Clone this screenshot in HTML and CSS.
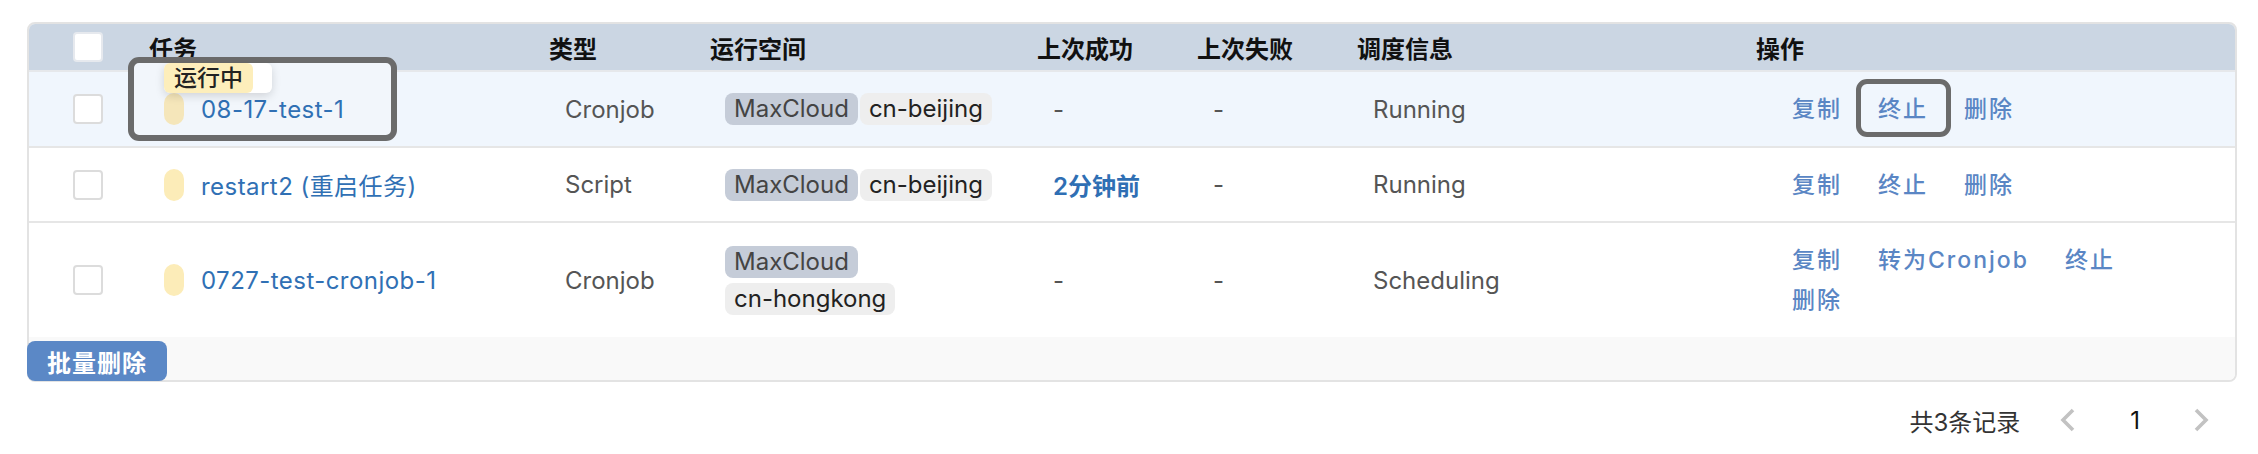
FILE: index.html
```html
<!DOCTYPE html>
<html lang="zh-CN">
<head>
<meta charset="utf-8">
<title>任务列表</title>
<link rel="stylesheet" href="styles.css">
</head>
<body>
<div class="page">
  <div class="table">
    <div class="row head">
      <div class="cell c-check"><span class="checkbox"></span></div>
      <div class="cell">任务</div>
      <div class="cell">类型</div>
      <div class="cell">运行空间</div>
      <div class="cell">上次成功</div>
      <div class="cell">上次失败</div>
      <div class="cell">调度信息</div>
      <div class="cell">操作</div>
    </div>

    <div class="row body r1 active">
      <div class="cell c-check"><span class="checkbox"></span></div>
      <div class="cell c-name">
        <span class="annot annot-name"></span>
        <span class="pill"></span><a class="name">08-17-test-1</a>
        <span class="tip"><span class="tip-label">运行中</span></span>
      </div>
      <div class="cell c-text">Cronjob</div>
      <div class="cell c-tags"><span class="tag tag-cloud">MaxCloud</span><span class="tag tag-region">cn-beijing</span></div>
      <div class="cell c-text">-</div>
      <div class="cell c-text">-</div>
      <div class="cell c-text">Running</div>
      <div class="cell c-actions">
        <a class="act">复制</a>
        <a class="act act-marked"><span class="annot annot-act"></span><span class="act-text">终止</span></a>
        <a class="act">删除</a>
      </div>
    </div>

    <div class="row body r2">
      <div class="cell c-check"><span class="checkbox"></span></div>
      <div class="cell c-name"><span class="pill"></span><a class="name">restart2 (重启任务)</a></div>
      <div class="cell c-text">Script</div>
      <div class="cell c-tags"><span class="tag tag-cloud">MaxCloud</span><span class="tag tag-region">cn-beijing</span></div>
      <div class="cell c-text"><a class="recent">2分钟前</a></div>
      <div class="cell c-text">-</div>
      <div class="cell c-text">Running</div>
      <div class="cell c-actions">
        <a class="act">复制</a>
        <a class="act">终止</a>
        <a class="act">删除</a>
      </div>
    </div>

    <div class="row body r3">
      <div class="cell c-check"><span class="checkbox"></span></div>
      <div class="cell c-name"><span class="pill"></span><a class="name">0727-test-cronjob-1</a></div>
      <div class="cell c-text">Cronjob</div>
      <div class="cell c-tags"><span class="tag tag-cloud">MaxCloud</span><span class="tag tag-region">cn-hongkong</span></div>
      <div class="cell c-text">-</div>
      <div class="cell c-text">-</div>
      <div class="cell c-text">Scheduling</div>
      <div class="cell c-actions">
        <a class="act">复制</a>
        <a class="act">转为Cronjob</a>
        <a class="act">终止</a>
        <a class="act">删除</a>
      </div>
    </div>

    <div class="footer">
      <button class="btn-batch">批量删除</button>
    </div>
  </div>

  <div class="pager">
    <span class="total">共3条记录</span>
    <svg class="chev chev-prev" width="17" height="24" viewBox="0 0 17 24"><path d="M14 2 L4 12 L14 22" fill="none" stroke="#c2c2c2" stroke-width="3.6" stroke-linejoin="miter"/></svg>
    <span class="page-num">1</span>
    <svg class="chev chev-next" width="17" height="24" viewBox="0 0 17 24"><path d="M3 2 L13 12 L3 22" fill="none" stroke="#c2c2c2" stroke-width="3.6" stroke-linejoin="miter"/></svg>
  </div>
</div>
</body>
</html>
```

FILE: styles.css
```css
* { box-sizing: border-box; }

body {
  margin: 0;
  background: #ffffff;
  font-family: Inter, "Noto Sans CJK SC", sans-serif;
  font-size: 24px;
  color: #333;
}

.page {
  padding: 22px 21px 0 27px;
}

.table {
  border: 2px solid #e3e3e3;
  border-radius: 8px;
  background: #fff;
}

.row {
  display: grid;
  grid-template-columns: 120px 400px 161px 327px 160px 160px 399px 1fr;
  align-items: center;
}

.cell {
  min-width: 0;
}

.c-check {
  padding-left: 44px;
  display: flex;
  align-items: center;
}

.checkbox {
  display: block;
  width: 30px;
  height: 30px;
  background: #fff;
  border: 2px solid #dcdcdc;
  border-radius: 4px;
}

/* header */
.head {
  height: 48px;
  background: #cbd6e3;
  border-bottom: 2px solid #e6e8eb;
  border-radius: 6px 6px 0 0;
  font-weight: 700;
  color: #111;
}
.head .checkbox { border-color: #e6e9ee; }

/* body rows */
.body { border-bottom: 2px solid #e6e6e6; }
.r1 { height: 76px; }
.r2 { height: 75px; }
.r3 { height: 114px; border-bottom: none; }
.active { background: #f0f6fd; }

.body .cell { padding-left: 16px; }
.body .c-check { padding-left: 44px; }

.c-text { color: #555; white-space: nowrap; }

.c-name {
  position: relative;
  display: flex;
  align-items: center;
  padding-left: 15px !important;
}

.pill {
  position: relative;
  z-index: 1;
  width: 20px;
  height: 32px;
  border-radius: 10px;
  background: #fcecb8;
  margin-right: 17px;
  flex: none;
}
.active .pill { background: #f5e6ba; }

.name {
  position: relative;
  z-index: 1;
  color: #3070b4;
  white-space: nowrap;
  letter-spacing: 0.45px;
}

.recent {
  color: #2f6fb4;
  font-weight: 600;
}

/* tags */
.c-tags {
  display: flex;
  flex-wrap: wrap;
  column-gap: 2px;
  row-gap: 5px;
  padding-left: 15px !important;
  padding-right: 30px;
}
.tag {
  display: inline-block;
  height: 32px;
  line-height: 32px;
  padding: 0 9px;
  border-radius: 8px;
  white-space: nowrap;
}
.tag-cloud { background: #c5ccd8; color: #444; }
.tag-region { background: #eeeeee; color: #222; }

/* actions */
.c-actions {
  display: flex;
  flex-wrap: wrap;
  column-gap: 36px;
  padding-left: 36px !important;
  padding-right: 70px;
  font-size: 23px;
  letter-spacing: 2px;
  font-weight: 500;
  line-height: 40px;
  color: #5a86c4;
}
.act {
  white-space: nowrap;
  color: #5a86c4;
}
.act-marked { position: relative; }
.act-text { position: relative; z-index: 1; }

/* annotations */
.annot {
  position: absolute;
  z-index: 0;
  border: 6px solid #6b6b6b;
  border-radius: 11px;
  background: #f2f6fb;
}
.annot-name {
  left: -21px;
  top: -36px;
  width: 269px;
  height: 84px;
}
.annot-act {
  left: -22px;
  top: -10px;
  width: 95px;
  height: 58px;
  border-width: 5px;
  background: #f0f6fd;
}

.tip {
  position: absolute;
  z-index: 2;
  left: 15px;
  top: -30px;
  width: 108px;
  height: 30px;
  background: #fff;
  border-radius: 6px;
  box-shadow: 0 3px 10px rgba(0, 0, 0, 0.14);
}
.tip-label {
  display: inline-block;
  height: 30px;
  line-height: 30px;
  padding: 0 10px;
  background: #fdeebb;
  border-radius: 6px;
  color: #222;
  font-size: 23px;
  font-weight: 500;
}

/* footer */
.footer {
  height: 43px;
  background: #f9f9f9;
  border-radius: 0 0 6px 6px;
  display: flex;
  align-items: flex-start;
  padding-top: 4px;
}
.btn-batch {
  margin-left: -2px;
  width: 140px;
  height: 40px;
  border: none;
  border-radius: 8px;
  background: #5b88c6;
  color: #fff;
  font-family: "Noto Sans CJK SC", sans-serif;
  font-size: 24px;
  font-weight: 700;
  letter-spacing: 1px;
  padding: 0;
}

/* pager */
.pager {
  display: flex;
  justify-content: flex-end;
  align-items: center;
  height: 36px;
  margin-top: 20px;
  padding-right: 27px;
  color: #333;
}
.total { margin-right: 39px; }
.chev { display: block; }
.chev-prev { margin-right: 54px; }
.page-num { color: #111; margin-right: 53px; }
```
